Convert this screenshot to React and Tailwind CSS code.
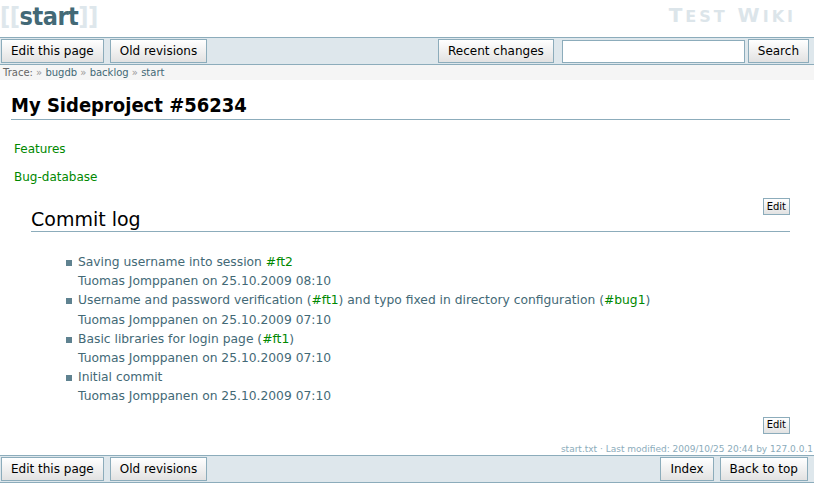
const font = { fontFamily: '"DejaVu Sans", Verdana, sans-serif' };
const condensed = { fontFamily: '"DejaVu Sans Condensed", "DejaVu Sans", sans-serif' };

const Btn = ({ children, className = "" }) => (
  <button
    className={`h-[24px] px-[9px] border border-[#8cacbb] bg-gradient-to-b from-white to-[#e2e2e2] text-[12px] text-black leading-none ${className}`}
  >
    {children}
  </button>
);

const SmallEdit = () => (
  <button className="h-[17px] px-[3px] border border-[#8cacbb] bg-gradient-to-b from-white to-[#e2e2e2] text-[10px] text-black leading-none">
    Edit
  </button>
);

const commits = [
  {
    msg: (
      <>
        Saving username into session <span className="text-[#008800]">#ft2</span>
      </>
    ),
    meta: "Tuomas Jomppanen on 25.10.2009 08:10",
  },
  {
    msg: (
      <>
        Username and password verification (<span className="text-[#008800]">#ft1</span>) and typo fixed in
        directory configuration (<span className="text-[#008800]">#bug1</span>)
      </>
    ),
    meta: "Tuomas Jomppanen on 25.10.2009 07:10",
  },
  {
    msg: (
      <>
        Basic libraries for login page (<span className="text-[#008800]">#ft1</span>)
      </>
    ),
    meta: "Tuomas Jomppanen on 25.10.2009 07:10",
  },
  { msg: "Initial commit", meta: "Tuomas Jomppanen on 25.10.2009 07:10" },
];

export default function App() {
  return (
    <div className="w-[814px] h-[487px] overflow-hidden bg-white" style={font}>
      {/* header */}
      <div className="flex justify-between items-start h-[37px]">
        <div className="text-[25px] font-bold leading-[34px] -tracking-[0.5px]" style={condensed}>
          <span className="text-[#dee7ec]">[[</span>
          <span className="text-[#436976]">start</span>
          <span className="text-[#dee7ec]">]]</span>
        </div>
        <div className="text-[#dce5ea] font-bold text-[20px] leading-[30px] tracking-[3px] whitespace-nowrap mr-[18px]">
          T<span className="text-[16px]">EST</span> W<span className="text-[16px]">IKI</span>
        </div>
      </div>

      {/* top bar */}
      <div className="flex justify-between items-center h-[28px] bg-[#dee7ec] border-y border-[#8cacbb] px-[1px]">
        <div className="flex gap-[6px]">
          <Btn>Edit this page</Btn>
          <Btn>Old revisions</Btn>
        </div>
        <div className="flex items-center gap-[3px] pr-[4px]">
          <Btn className="mr-[5px] px-[8px]">Recent changes</Btn>
          <input className="w-[183px] h-[23px] border border-[#8cacbb] bg-white" />
          <Btn>Search</Btn>
        </div>
      </div>

      {/* breadcrumbs */}
      <div className="h-[15px] bg-[#f5f5f5] text-[10px] leading-[15px] pl-[3px] text-[#666]">
        Trace: <span className="text-[#999]">»</span> <span className="text-[#436976]">bugdb</span>{" "}
        <span className="text-[#999]">»</span> <span className="text-[#436976]">backlog</span>{" "}
        <span className="text-[#999]">»</span> <span className="text-[#436976]">start</span>
      </div>

      {/* page */}
      <div className="pl-[11px] pr-[24px]">
        <h1
          className="mt-[12px] text-[20px] font-bold text-black leading-[26px] border-b border-[#8cacbb] pb-[1px]"
          style={condensed}
        >
          My Sideproject #56234
        </h1>
        <div className="pl-[3px] text-[12px] text-[#008800]">
          <p className="mt-[21px] leading-[16px]">Features</p>
          <p className="mt-[12px] leading-[16px]">Bug-database</p>
        </div>
        <div className="flex justify-end mt-[13px] h-[17px]">
          <SmallEdit />
        </div>
        <h2 className="ml-[20px] -mt-[8px] text-[19px] text-black leading-[24px] border-b border-[#8cacbb]">
          Commit log
        </h2>
        <ul className="mt-[21px] ml-[55px] text-[12.3px] text-[#436976] leading-[19.2px]">
          {commits.map((c, i) => (
            <li key={i} className="flex">
              <span className="w-[6px] h-[6px] bg-[#5f8290] mt-[7px] mr-[6px] shrink-0" />
              <div>
                <div>{c.msg}</div>
                <div>{c.meta}</div>
              </div>
            </li>
          ))}
        </ul>
        <div className="flex justify-end mt-[10px] h-[17px]">
          <SmallEdit />
        </div>
      </div>

      {/* meta */}
      <div className="text-right text-[9px] text-[#8cacbb] leading-[12px] mt-[9px] whitespace-nowrap pr-[1px]">
        start.txt · Last modified: 2009/10/25 20:44 by 127.0.0.1
      </div>

      {/* bottom bar */}
      <div className="flex justify-between items-center h-[28px] bg-[#dee7ec] border-y border-[#8cacbb] px-[1px]">
        <div className="flex gap-[6px]">
          <Btn>Edit this page</Btn>
          <Btn>Old revisions</Btn>
        </div>
        <div className="flex gap-[6px] pr-[5px]">
          <Btn>Index</Btn>
          <Btn>Back to top</Btn>
        </div>
      </div>
    </div>
  );
}
